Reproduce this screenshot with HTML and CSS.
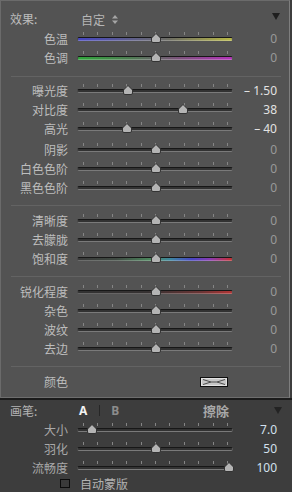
FILE: index.html
```html
<!DOCTYPE html>
<html>
<head>
<meta charset="utf-8">
<link rel="stylesheet" href="styles.css">
</head>
<body>
<div class="panel">
  <div class="head">
    <span class="hlabel">效果:</span>
    <span class="preset">自定<svg class="updown" width="6" height="9" viewBox="0 0 6 9"><path d="M0 3.5 L3 0 L6 3.5 Z M0 5.5 L6 5.5 L3 9 Z" fill="#a6a6a6"/></svg></span>
    <span class="tri"></span>
  </div>

  <div class="group g1">
    <div class="row"><span class="lab">色温</span><div class="slider"><div class="ticks"><i></i><i></i><i></i><i></i><i></i><i></i><i></i><i></i><i></i><i></i><i></i></div><div class="track temp"></div><svg class="thumb" style="left:74px" width="10" height="10" viewBox="0 0 10 10"><path d="M5 0.5 L9.5 5 L9.5 8 Q9.5 9.5 8 9.5 L2 9.5 Q0.5 9.5 0.5 8 L0.5 5 Z" class="tp"/></svg></div><span class="val">0</span></div>
    <div class="row"><span class="lab">色调</span><div class="slider"><div class="ticks"><i></i><i></i><i></i><i></i><i></i><i></i><i></i><i></i><i></i><i></i><i></i></div><div class="track tint"></div><svg class="thumb" style="left:74px" width="10" height="10" viewBox="0 0 10 10"><path d="M5 0.5 L9.5 5 L9.5 8 Q9.5 9.5 8 9.5 L2 9.5 Q0.5 9.5 0.5 8 L0.5 5 Z" class="tp"/></svg></div><span class="val">0</span></div>
  </div>
  <div class="sep"></div>

  <div class="group g2">
    <div class="row"><span class="lab">曝光度</span><div class="slider"><div class="ticks"><i></i><i></i><i></i><i></i><i></i><i></i><i></i><i></i><i></i><i></i><i></i></div><div class="track"></div><svg class="thumb" style="left:46px" width="10" height="10" viewBox="0 0 10 10"><path d="M5 0.5 L9.5 5 L9.5 8 Q9.5 9.5 8 9.5 L2 9.5 Q0.5 9.5 0.5 8 L0.5 5 Z" class="tp"/></svg></div><span class="val on">– 1.50</span></div>
    <div class="row"><span class="lab">对比度</span><div class="slider"><div class="ticks"><i></i><i></i><i></i><i></i><i></i><i></i><i></i><i></i><i></i><i></i><i></i></div><div class="track"></div><svg class="thumb" style="left:101px" width="10" height="10" viewBox="0 0 10 10"><path d="M5 0.5 L9.5 5 L9.5 8 Q9.5 9.5 8 9.5 L2 9.5 Q0.5 9.5 0.5 8 L0.5 5 Z" class="tp"/></svg></div><span class="val on">38</span></div>
    <div class="row"><span class="lab">高光</span><div class="slider"><div class="ticks"><i></i><i></i><i></i><i></i><i></i><i></i><i></i><i></i><i></i><i></i><i></i></div><div class="track"></div><svg class="thumb" style="left:45px" width="10" height="10" viewBox="0 0 10 10"><path d="M5 0.5 L9.5 5 L9.5 8 Q9.5 9.5 8 9.5 L2 9.5 Q0.5 9.5 0.5 8 L0.5 5 Z" class="tp"/></svg></div><span class="val on">– 40</span></div>
    <div class="row gap2"><span class="lab">阴影</span><div class="slider"><div class="ticks"><i></i><i></i><i></i><i></i><i></i><i></i><i></i><i></i><i></i><i></i><i></i></div><div class="track"></div><svg class="thumb" style="left:74px" width="10" height="10" viewBox="0 0 10 10"><path d="M5 0.5 L9.5 5 L9.5 8 Q9.5 9.5 8 9.5 L2 9.5 Q0.5 9.5 0.5 8 L0.5 5 Z" class="tp"/></svg></div><span class="val">0</span></div>
    <div class="row"><span class="lab">白色色阶</span><div class="slider"><div class="ticks"><i></i><i></i><i></i><i></i><i></i><i></i><i></i><i></i><i></i><i></i><i></i></div><div class="track"></div><svg class="thumb" style="left:74px" width="10" height="10" viewBox="0 0 10 10"><path d="M5 0.5 L9.5 5 L9.5 8 Q9.5 9.5 8 9.5 L2 9.5 Q0.5 9.5 0.5 8 L0.5 5 Z" class="tp"/></svg></div><span class="val">0</span></div>
    <div class="row"><span class="lab">黑色色阶</span><div class="slider"><div class="ticks"><i></i><i></i><i></i><i></i><i></i><i></i><i></i><i></i><i></i><i></i><i></i></div><div class="track"></div><svg class="thumb" style="left:74px" width="10" height="10" viewBox="0 0 10 10"><path d="M5 0.5 L9.5 5 L9.5 8 Q9.5 9.5 8 9.5 L2 9.5 Q0.5 9.5 0.5 8 L0.5 5 Z" class="tp"/></svg></div><span class="val">0</span></div>
  </div>
  <div class="sep"></div>

  <div class="group g3">
    <div class="row"><span class="lab">清晰度</span><div class="slider"><div class="ticks"><i></i><i></i><i></i><i></i><i></i><i></i><i></i><i></i><i></i><i></i><i></i></div><div class="track"></div><svg class="thumb" style="left:74px" width="10" height="10" viewBox="0 0 10 10"><path d="M5 0.5 L9.5 5 L9.5 8 Q9.5 9.5 8 9.5 L2 9.5 Q0.5 9.5 0.5 8 L0.5 5 Z" class="tp"/></svg></div><span class="val">0</span></div>
    <div class="row"><span class="lab">去朦胧</span><div class="slider"><div class="ticks"><i></i><i></i><i></i><i></i><i></i><i></i><i></i><i></i><i></i><i></i><i></i></div><div class="track"></div><svg class="thumb" style="left:74px" width="10" height="10" viewBox="0 0 10 10"><path d="M5 0.5 L9.5 5 L9.5 8 Q9.5 9.5 8 9.5 L2 9.5 Q0.5 9.5 0.5 8 L0.5 5 Z" class="tp"/></svg></div><span class="val">0</span></div>
    <div class="row"><span class="lab">饱和度</span><div class="slider"><div class="ticks"><i></i><i></i><i></i><i></i><i></i><i></i><i></i><i></i><i></i><i></i><i></i></div><div class="track sat"></div><svg class="thumb" style="left:74px" width="10" height="10" viewBox="0 0 10 10"><path d="M5 0.5 L9.5 5 L9.5 8 Q9.5 9.5 8 9.5 L2 9.5 Q0.5 9.5 0.5 8 L0.5 5 Z" class="tp"/></svg></div><span class="val">0</span></div>
  </div>
  <div class="sep"></div>

  <div class="group g4">
    <div class="row"><span class="lab">锐化程度</span><div class="slider"><div class="ticks"><i></i><i></i><i></i><i></i><i></i><i></i><i></i><i></i><i></i><i></i><i></i></div><div class="track sharp"></div><svg class="thumb" style="left:74px" width="10" height="10" viewBox="0 0 10 10"><path d="M5 0.5 L9.5 5 L9.5 8 Q9.5 9.5 8 9.5 L2 9.5 Q0.5 9.5 0.5 8 L0.5 5 Z" class="tp"/></svg></div><span class="val">0</span></div>
    <div class="row"><span class="lab">杂色</span><div class="slider"><div class="ticks"><i></i><i></i><i></i><i></i><i></i><i></i><i></i><i></i><i></i><i></i><i></i></div><div class="track"></div><svg class="thumb" style="left:74px" width="10" height="10" viewBox="0 0 10 10"><path d="M5 0.5 L9.5 5 L9.5 8 Q9.5 9.5 8 9.5 L2 9.5 Q0.5 9.5 0.5 8 L0.5 5 Z" class="tp"/></svg></div><span class="val">0</span></div>
    <div class="row"><span class="lab">波纹</span><div class="slider"><div class="ticks"><i></i><i></i><i></i><i></i><i></i><i></i><i></i><i></i><i></i><i></i><i></i></div><div class="track"></div><svg class="thumb" style="left:74px" width="10" height="10" viewBox="0 0 10 10"><path d="M5 0.5 L9.5 5 L9.5 8 Q9.5 9.5 8 9.5 L2 9.5 Q0.5 9.5 0.5 8 L0.5 5 Z" class="tp"/></svg></div><span class="val">0</span></div>
    <div class="row"><span class="lab">去边</span><div class="slider"><div class="ticks"><i></i><i></i><i></i><i></i><i></i><i></i><i></i><i></i><i></i><i></i><i></i></div><div class="track"></div><svg class="thumb" style="left:74px" width="10" height="10" viewBox="0 0 10 10"><path d="M5 0.5 L9.5 5 L9.5 8 Q9.5 9.5 8 9.5 L2 9.5 Q0.5 9.5 0.5 8 L0.5 5 Z" class="tp"/></svg></div><span class="val">0</span></div>
  </div>
  <div class="sep"></div>

  <div class="group g5">
    <div class="row"><span class="lab">颜色</span><div class="swatchcell"><svg width="28" height="10" viewBox="0 0 28 10"><rect x="0.5" y="0.5" width="27" height="9" fill="#c6c6c6" stroke="#0f0f0f"/><rect x="1.5" y="1.5" width="25" height="7" fill="none" stroke="#e2e2e2"/><path d="M3 2.5 L11 5 L3 7.5 M25 2.5 L17 5 L25 7.5 M11 5 L17 5" stroke="#4e4e4e" fill="none" stroke-width="1"/></svg></div></div>
  </div>
</div>

<div class="brush">
  <div class="bhead">
    <span class="hlabel">画笔:</span>
    <span class="ab a">A</span>
    <span class="vdiv"></span>
    <span class="ab b">B</span>
    <span class="erase">擦除</span>
    <span class="tri tri2"></span>
  </div>
  <div class="row"><span class="lab">大小</span><div class="slider"><div class="ticks"><i></i><i></i><i></i><i></i><i></i><i></i><i></i><i></i><i></i><i></i><i></i></div><div class="track"></div><svg class="thumb" style="left:10px" width="10" height="10" viewBox="0 0 10 10"><path d="M5 0.5 L9.5 5 L9.5 8 Q9.5 9.5 8 9.5 L2 9.5 Q0.5 9.5 0.5 8 L0.5 5 Z" class="tp"/></svg></div><span class="val bval">7.0</span></div>
  <div class="row"><span class="lab">羽化</span><div class="slider"><div class="ticks"><i></i><i></i><i></i><i></i><i></i><i></i><i></i><i></i><i></i><i></i><i></i></div><div class="track"></div><svg class="thumb" style="left:74px" width="10" height="10" viewBox="0 0 10 10"><path d="M5 0.5 L9.5 5 L9.5 8 Q9.5 9.5 8 9.5 L2 9.5 Q0.5 9.5 0.5 8 L0.5 5 Z" class="tp"/></svg></div><span class="val bval">50</span></div>
  <div class="row"><span class="lab">流畅度</span><div class="slider"><div class="ticks"><i></i><i></i><i></i><i></i><i></i><i></i><i></i><i></i><i></i><i></i><i></i></div><div class="track"></div><svg class="thumb" style="left:147px" width="10" height="10" viewBox="0 0 10 10"><path d="M5 0.5 L9.5 5 L9.5 8 Q9.5 9.5 8 9.5 L2 9.5 Q0.5 9.5 0.5 8 L0.5 5 Z" class="tp"/></svg></div><span class="val bval">100</span></div>
  <div class="check"><span class="box"></span><span class="cklab">自动蒙版</span></div>
</div>
</body>
</html>
```

FILE: styles.css
```css
* { box-sizing: border-box; }
html, body { margin: 0; padding: 0; }
body {
  width: 292px;
  height: 492px;
  overflow: hidden;
  background: #3d3d3d;
  font-family: "Noto Sans CJK SC", "Noto Sans", sans-serif;
  font-size: 12px;
  color: #bdbdbd;
}
.panel {
  width: 290px;
  background: #535353;
  border: 1px solid #6b6b6b;
  border-right-color: #7e7e7e;
  border-bottom-color: #6e6e6e;
}
.head {
  display: flex;
  height: 28px;
  padding: 9px 9px 0 9px;
  line-height: 17px;
}
.hlabel { width: 71px; color: #bcbcbc; }
.preset { display: flex; align-items: center; gap: 7px; color: #b6b6b6; }
.tri {
  margin-left: auto;
  margin-top: 3px;
  width: 0;
  height: 0;
  border-left: 4px solid transparent;
  border-right: 4px solid transparent;
  border-top: 7px solid #1f1f1f;
}
.sep { height: 1px; background: #636363; margin: 0 8px 0 10px; }
.g1 { padding-bottom: 9px; }
.g2 { padding: 4px 0 8px; }
.g3 { padding: 5px 0 8px; }
.g4 { padding: 5px 0 8px; }
.g5 { padding: 5px 0 6px; }
.gap2 { margin-top: 2px; }

.row { display: flex; height: 19px; }
.lab { width: 67px; margin-right: 9px; text-align: right; line-height: 19px; }
.slider { position: relative; width: 156px; padding-top: 3px; }
.ticks {
  display: flex;
  justify-content: space-between;
  width: 145px;
  height: 3px;
  margin-left: 6px;
}
.ticks i { display: block; width: 1px; height: 3px; background: #858585; }
.track {
  margin-top: 2px;
  height: 4px;
  border-radius: 2px;
  border: 1px solid #171717;
  border-left-color: #4a4a4a;
  border-right-color: #5a5a5a;
  border-bottom-color: #7a7a7a;
  background: #323232;
}
.track.temp { background: linear-gradient(to right, #4646c2, #5e5e8a 35%, #6e6e62 60%, #b8b846); border-bottom-color: rgba(255,255,255,0.25); }
.track.tint { background: linear-gradient(to right, #2fa43a, #4e7a52 35%, #7a527a 65%, #b232b8); border-bottom-color: rgba(255,255,255,0.25); }
.track.sat { background: linear-gradient(to right, #3a3a3a 0%, #3f4a42 25%, #4c8a5e 48%, #3c86a0 60%, #4846c4 74%, #8a3ab0 86%, #c83030 100%); border-bottom-color: rgba(255,255,255,0.25); }
.track.sharp { background: linear-gradient(to right, #323232 0%, #363232 45%, #6a3434 80%, #b03434 100%); border-bottom-color: rgba(255,255,255,0.25); }
.thumb { position: absolute; top: 4px; }
.tp { fill: #b4b4b4; stroke: #2a2a2a; stroke-width: 0.9; }
.val {
  width: 44px;
  text-align: right;
  line-height: 19px;
  font-family: "Noto Sans", sans-serif;
  color: #999999;
}
.val.on { color: #e2e2e2; }
.swatchcell { width: 156px; display: flex; justify-content: flex-end; align-items: center; padding-right: 5px; }

.brush {
  border-top: 2px solid #1b1b1b;
  background: #3d3d3d;
  height: 94px;
}
.bhead {
  display: flex;
  align-items: center;
  height: 20px;
  padding: 0 10px;
}
.bhead .hlabel { width: 69px; color: #b4b4b4; }
.ab { font-family: "Noto Sans", sans-serif; font-weight: 700; font-size: 12px; }
.a { color: #f2f2f2; }
.b { color: #8c8c8c; margin-left: 11px; }
.vdiv { width: 1px; height: 11px; background: #262626; margin-left: 12px; }
.erase { margin-left: auto; margin-right: 45px; font-weight: 700; font-size: 13px; color: #a8a8a8; }
.tri2 { margin-left: 0; margin-top: 0; border-top-color: #232323; }
.brush .lab { width: 68px; color: #a9a9a9; }
.bval { color: #d3e1ee; }
.check { display: flex; align-items: center; height: 13px; padding-left: 60px; }
.box { width: 10px; height: 9px; border: 1px solid #0c0c0c; background: #3a3a3a; }
.cklab { margin-left: 10px; color: #b2b2b2; }
```
